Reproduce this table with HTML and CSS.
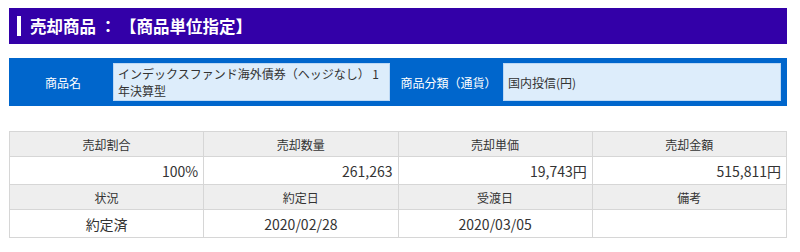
FILE: index.html
```html
<!DOCTYPE html>
<html lang="ja">
<head>
<meta charset="utf-8">
<link rel="stylesheet" href="styles.css">
</head>
<body>
<div class="page">
  <h2 class="title"><span class="title-mark"></span>売却商品 ： 【商品単位指定】</h2>
  <div class="product">
    <div class="p-label">商品名</div>
    <div class="p-value">インデックスファンド海外債券（ヘッジなし） 1年決算型</div>
    <div class="p-label">商品分類（通貨）</div>
    <div class="p-value p-mid">国内投信(円)</div>
  </div>
  <table class="detail">
    <tr class="th-row">
      <th>売却割合</th><th>売却数量</th><th>売却単価</th><th>売却金額</th>
    </tr>
    <tr class="td-row">
      <td class="num">100%</td><td class="num">261,263</td><td class="num">19,743円</td><td class="num">515,811円</td>
    </tr>
    <tr class="th-row">
      <th>状況</th><th>約定日</th><th>受渡日</th><th>備考</th>
    </tr>
    <tr class="td-row">
      <td class="ctr">約定済</td><td class="ctr">2020/02/28</td><td class="ctr">2020/03/05</td><td class="ctr"></td>
    </tr>
  </table>
</div>
</body>
</html>
```

FILE: styles.css
```css
html, body {
  margin: 0;
  padding: 0;
  background: #ffffff;
}
body {
  font-family: "Noto Sans CJK JP", "Noto Sans", sans-serif;
  color: #333333;
}
.page {
  width: 778px;
  margin-left: 9px;
  padding-top: 8px;
}
.title {
  margin: 0;
  height: 36px;
  background: #3300a8;
  color: #ffffff;
  font-size: 16.5px;
  font-weight: bold;
  display: flex;
  align-items: center;
  padding-left: 8px;
  white-space: pre;
}
.title-mark {
  display: inline-block;
  width: 4px;
  height: 20px;
  background: #ffffff;
  margin-right: 9px;
}
.product {
  margin-top: 14px;
  background: #0066cc;
  display: grid;
  grid-template-columns: 104px 277px 113px 278px;
  padding: 5px 5px 5px 0;
  height: 38px;
}
.p-label {
  color: #ffffff;
  font-size: 12px;
  display: flex;
  align-items: center;
  justify-content: center;
  padding-left: 4px;
}
.p-value {
  background: #ddedfb;
  border: 1px solid #bcd8f4;
  font-size: 12px;
  line-height: 17px;
  padding: 1px 3px 0 4px;
  color: #333333;
}
.p-mid {
  display: flex;
  align-items: center;
  padding-top: 0;
}
.detail {
  margin-top: 25px;
  width: 778px;
  border-collapse: collapse;
  table-layout: fixed;
}
.detail th, .detail td {
  border: 1px solid #d6d6d6;
  border-top: none;
  border-bottom: none;
  padding: 0 5px;
}
.detail tr {
  border-top: 1px solid #d6d6d6;
}
.detail tr:last-child {
  border-bottom: 1px solid #d6d6d6;
}
.th-row th {
  background: #eeeeee;
  font-weight: normal;
  font-size: 12px;
  height: 24px;
  color: #333333;
}
.td-row td {
  font-size: 14px;
  height: 27px;
  color: #333333;
}
.num {
  text-align: right;
}
.ctr {
  text-align: center;
}
```
